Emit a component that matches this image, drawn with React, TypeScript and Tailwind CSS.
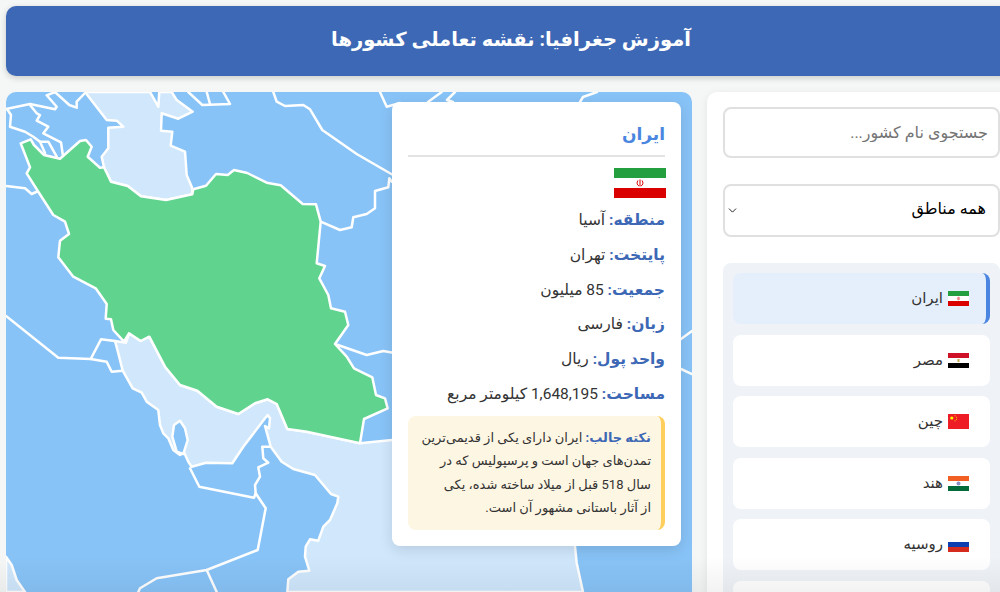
import { ChevronDown } from "lucide-react";

const countries = [
  { name: "ایران", flag: "ir" },
  { name: "مصر", flag: "eg" },
  { name: "چین", flag: "cn" },
  { name: "هند", flag: "in" },
  { name: "روسیه", flag: "ru" },
  { name: "", flag: "" },
];

const facts = [
  { label: "منطقه:", value: "آسیا" },
  { label: "پایتخت:", value: "تهران" },
  { label: "جمعیت:", value: "85 میلیون" },
  { label: "زبان:", value: "فارسی" },
  { label: "واحد پول:", value: "ریال" },
  { label: "مساحت:", value: "1,648,195 کیلومتر مربع" },
];

const Flag = ({ code, className }: { code: string; className: string }) => {
  if (code === "ir") {
    return (
      <svg viewBox="0 0 52 30" preserveAspectRatio="none" className={className}>
        <rect width="52" height="30" fill="#fff" />
        <rect width="52" height="10" fill="#239f40" />
        <rect y="20" width="52" height="10" fill="#da0000" />
        <path d="M26 11.5v7M24 12.5c-1.6 2-1 4.600 1 5.500M28 12.500c1.600 2 1 4.600-1 5.500" stroke="#da0000" strokeWidth="1" fill="none" />
      </svg>
    );
  }
  if (code === "eg") {
    return (
      <svg viewBox="0 0 21 15" preserveAspectRatio="none" className={className}>
        <rect width="21" height="15" fill="#fff" />
        <rect width="21" height="5" fill="#ce1126" />
        <rect y="10" width="21" height="5" fill="#000" />
        <rect x="9.500" y="6" width="2" height="3" fill="#c8a951" />
      </svg>
    );
  }
  if (code === "cn") {
    return (
      <svg viewBox="0 0 21 15" preserveAspectRatio="none" className={className}>
        <rect width="21" height="15" fill="#ee1c25" />
        <circle cx="3.800" cy="4" r="1.600" fill="#ffff00" />
        <circle cx="7" cy="1.800" r="0.500" fill="#ffff00" />
        <circle cx="8.500" cy="3.300" r="0.500" fill="#ffff00" />
        <circle cx="8.500" cy="5.300" r="0.500" fill="#ffff00" />
        <circle cx="7" cy="6.800" r="0.500" fill="#ffff00" />
      </svg>
    );
  }
  if (code === "in") {
    return (
      <svg viewBox="0 0 21 15" preserveAspectRatio="none" className={className}>
        <rect width="21" height="15" fill="#fff" />
        <rect width="21" height="5" fill="#f15f22" />
        <rect y="10" width="21" height="5" fill="#046a38" />
        <circle cx="10.500" cy="7.500" r="2" fill="#8c8fc4" />
      </svg>
    );
  }
  return (
    <svg viewBox="0 0 21 15" preserveAspectRatio="none" className={className}>
      <rect width="21" height="15" fill="#fff" />
      <rect y="5" width="21" height="5" fill="#0d3fb0" />
      <rect y="10" width="21" height="5" fill="#d52b1e" />
    </svg>
  );
};

const iranPath =
  "M20.700 143.300 30.700 139.300 34 145 44 155 60 158.700 80 141 86 140 91.700 146.700 87.700 156.700 100 167.700 104 167.300 111 181.700 127.700 186 141 196.300 166 200 192.300 194.300 193.300 189.300 206 185.700 216 174 227.700 175 234 170 247.300 173 266.700 182.700 280.700 185.300 302.700 204 316 204.300 320.700 221.700 316.700 263.300 325 266 319.300 278.300 328.300 295 331 308.300 345 311.700 348.300 325 335 344 346.700 356.700 354 368.300 372.300 377.300 376 395 385 398.300 387.700 408.300 364 419 360 443.300 306.700 431.700 287.300 429 276.700 404 267.700 399.300 255 403.300 238.300 414 216.700 406.700 197.300 390.700 180 385 165 366.700 149.300 336.700 140.700 341 129 333.300 124 341.700 113.300 330 111 319.300 105.700 318.700 106.700 304 95.700 288.300 73.300 276.700 58.300 257.300 60 240.700 69 234 65 221.700 53.300 215 38.300 191.700 26.700 173.300 30 167.300Z";

const caspianPath =
  "M85 92 106.700 120 116.700 120.700 123.300 126.700 108.300 127.700 108.300 148.300 101.700 156.700 104 167.300 111 181.700 127.700 186 141 196.300 166 200 192.300 194.300 192.300 188.300 186.700 175 185 151.700 170.700 145.700 172.300 131.700 161 130.700 161.700 113.300 178.300 118.700 192.700 111.700 176.700 100 171.700 92 159.300 92 158.300 106.700 150 92Z";

const gulfPath =
  "M115 341 126 342.700 129 333.300 140.700 341 149.300 336.700 165 366.700 180 385 197.300 390.700 216.700 406.700 238.300 414 255 403.300 267.700 399.300 276.700 404 287.300 429 306.700 431.700 360 443.300 392 440 575 440 575 546.700 576.700 563 583 592 287.300 592 288.300 579.300 298.300 571.700 309.300 570.700 305 556.700 305.700 546.700 310 539.300 318.300 540.700 323.300 526.700 330 520 337.300 503.300 338.300 496.700 331 494 315 475 293.300 469 281.700 461.700 270.700 446.700 265 426 269 428.300 270 418.300 267.700 415 265 418.300 243.300 446.700 232.300 463.300 206 462.700 191.700 466.700 188.300 461.700 184.300 452.700 180 455 173.300 450 168.300 438.300 163.300 433.300 160 425 158.300 410 146.700 401.700 141.700 392.700 132.700 388.300 122.700 370.700 118.300 353.300Z";

const borders = [
  "6 109 30 104 55 109.300 56.700 106.700 46.700 95.300 55 92 69.300 105 76.700 107.700 76.700 101.700 85 93",
  "7 109 11 115 10 126.700 25 131.700 33.300 136.700 40 141.700 48.300 141.700 56.700 156.700",
  "30 105 36.700 113.300 40 115 36.700 120.700 48.300 126.700 43.300 133.300 61 142.300 63.300 158.300",
  "40 141.700 45 153",
  "6 186 25 188.300 31.700 194 38.300 191",
  "6 316 58.300 357.700 90.700 359 106.700 361.700 111.700 371.700 122.700 370.700",
  "90.700 359 101 339.300 115 341",
  "273.300 92 276.700 101.700 285 106 303.300 105 310 109.300 322.300 130 356.700 154 393 175",
  "380 92 386.700 106.700 400 103",
  "188.300 92 202.300 105 230 104 223.300 92",
  "206.700 92 210 104",
  "428 102 441.700 92",
  "455 92 447 100 453 102",
  "580 102 583 97 597 92",
  "320.700 221.700 340 230 351.700 227.300 353.300 217.300 366.700 214 375 208.300 375 191 388.300 187.300 389.300 178.300 391.700 181.700 400 183",
  "335 344 366.700 355 383.300 351 400 354",
  "681 339 692 331",
  "681 369 692 374",
  "190 468.300 199.300 486.700 254 497.700 255.700 493.300 255 485 260 476.700 258.300 467.300 268.300 462.700 263.300 458.300 262.300 446.700 270.700 446.700",
  "255.700 493.300 265.700 508.300 257.700 550 206.700 570 156.700 578.300 140 588.300 138.300 592",
  "206.700 570 216.700 592",
];

const MapDrawing = () => (
  <svg viewBox="6 92 686 500" className="block w-[686px] h-[500px]">
    <rect x="6" y="92" width="686" height="500" fill="#88c3f7" />
    <g stroke="#fff" strokeWidth="2.500" strokeLinejoin="round" strokeLinecap="round">
      <path d={caspianPath} fill="#d0e7fc" />
      <path d={gulfPath} fill="#d0e7fc" />
      <path d="M6 556.700 11.700 565 16.700 580 25 592H6Z" fill="#d0e7fc" />
      <path
        d="M180 420.700 174 425 172.300 436.700 176.700 451.700 183.300 454 187.700 440 185 428.300Z"
        fill="#88c3f7"
      />
      {borders.map((b) => (
        <polyline key={b} points={b} fill="none" />
      ))}
      <path d={iranPath} fill="#60d48f" />
    </g>
  </svg>
);

const App = () => {
  return (
    <div
      dir="ltr"
      className="relative w-[1000px] h-[592px] overflow-hidden bg-[#f5f7f7] font-['Roboto','DejaVu_Sans',sans-serif] text-[#333]"
    >
      <div dir="rtl" className="w-[1022px] p-[6px]">
        <header className="h-[70px] flex items-center justify-center rounded-[10px] bg-[#3d68b5] pb-[2px] shadow-[0_2px_6px_rgba(0,0,0,0.18)]">
          <h1 className="text-[19.500px] font-bold text-white">آموزش جغرافیا: نقشه تعاملی کشورها</h1>
        </header>

        <div className="mt-4 flex gap-[15px]">
          <aside className="w-[309px] shrink-0 h-[500px] rounded-t-[10px] bg-white px-4 pt-[15px] shadow-[0_2px_8px_rgba(0,0,0,0.08)]">
            <input
              placeholder="جستجوی نام کشور..."
              className="block w-full h-[51px] rounded-[8px] border-2 border-[#e0e0e0] bg-white px-[10px] text-[16px] placeholder:text-[#757575] outline-none"
            />
            <div className="relative mt-[26px]">
              <select className="block w-full h-[53px] appearance-none rounded-[8px] border-2 border-[#e0e0e0] bg-white px-[12px] pb-[3px] text-[16px] font-medium text-black">
                <option>همه مناطق</option>
              </select>
              <ChevronDown className="absolute left-[3px] top-[20px] w-[13px] h-[13px] text-[#222]" strokeWidth={1.800} />
            </div>
            <ul className="mt-[26px] flex flex-col gap-[10.500px] rounded-t-[8px] bg-[#eff3f8] p-[10px]">
              {countries.map((c, i) => (
                <li
                  key={i}
                  className={
                    i === 0
                      ? "flex h-[51px] shrink-0 items-center gap-[5px] rounded-[8px] border-r-4 border-[#4a86e0] bg-[#e5effc] pr-[17px] text-[15px]"
                      : "flex h-[51px] shrink-0 items-center gap-[5px] rounded-[8px] bg-white pr-[21px] text-[15px]"
                  }
                >
                  {c.flag && <Flag code={c.flag} className="w-[21px] h-[15px] shrink-0" />}
                  {c.name && <span>{c.name}</span>}
                </li>
              ))}
            </ul>
          </aside>

          <main className="relative w-[686px] h-[500px] overflow-hidden rounded-t-[10px]">
            <MapDrawing />
            <section className="absolute top-[10px] right-[11px] w-[289px] h-[444px] rounded-[8px] bg-white p-4 shadow-[0_4px_14px_rgba(0,0,0,0.12)]">
              <h2 className="h-[39px] border-b-2 border-[#e3e3e3] text-[17px] font-bold leading-[32px] text-[#4a86e0]">
                ایران
              </h2>
              <Flag code="ir" className="mt-[11px] -mr-px w-[52px] h-[30px]" />
              <div className="mt-[5px]">
                {facts.map((f) => (
                  <p key={f.label} className="h-[34.800px] text-[15.500px] leading-[34.800px]">
                    <strong className="font-bold text-[#3d68b5]">{f.label}</strong> {f.value}
                  </p>
                ))}
              </div>
              <div className="mt-[4px] h-[114px] rounded-[8px] border-r-4 border-[#ffce5c] bg-[#fdf6e3] py-[10px] pl-[8px] pr-[10px] text-[13px] leading-[23.400px]">
                <strong className="font-bold text-[#3d68b5]">نکته جالب:</strong> ایران دارای یکی از قدیمی‌ترین
                <br />
                تمدن‌های جهان است و پرسپولیس که در
                <br />
                سال 518 قبل از میلاد ساخته شده، یکی
                <br />
                از آثار باستانی مشهور آن است.
              </div>
            </section>
          </main>
        </div>
      </div>
      <div className="pointer-events-none absolute bottom-0 left-0 right-0 h-[36px] bg-gradient-to-t from-black/5 to-transparent" />
    </div>
  );
};

export default App;
